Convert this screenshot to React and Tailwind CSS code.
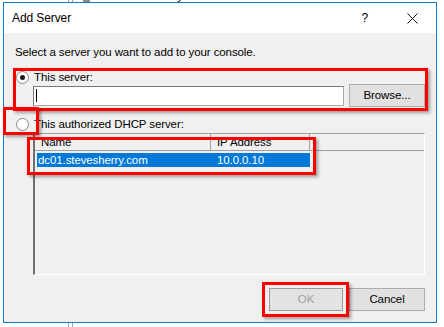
import React from 'react';

function Radio({ checked }) {
  return (
    <div className="w-[13px] h-[13px] rounded-full border border-[#8a8a8a] bg-white flex items-center justify-center shrink-0">
      {checked && <div className="w-[5px] h-[5px] rounded-full bg-[#1a1a1a]" />}
    </div>
  );
}

function Mark({ className }) {
  // red annotation box drawn over the screenshot
  return (
    <div
      className={`absolute border-[3px] border-[#ff0000] shadow-[2px_2px_3px_rgba(0,0,0,0.35)] pointer-events-none ${className}`}
    />
  );
}

function Button({ children, disabled }) {
  return (
    <div
      className={`h-[23px] flex items-center justify-center border ${
        disabled ? 'border-[#9a9a9a] bg-[#e3e3e3] text-[#a0a0a0]' : 'border-[#adadad] bg-[#e1e1e1] text-black'
      }`}
    >
      {children}
    </div>
  );
}

export default function App() {
  return (
    <div className="relative w-[444px] h-[327px] bg-white overflow-hidden font-['Liberation_Sans',Arial,sans-serif] text-[11.5px] tracking-[-0.1px] text-black">
      {/* bit of the window behind */}
      <div className="flex h-[2px] overflow-hidden">
        <div className="ml-[68px] w-px bg-[#a0a0a0]" />
        <div className="ml-[3px] w-px bg-[#a0a0a0]" />
        <div className="ml-[10px] w-[7px] bg-[#8c8c8c]" />
        <div className="ml-[7px] -mt-[10px] leading-[12px] whitespace-nowrap">dc01.stevesherry.com</div>
      </div>

      {/* dialog */}
      <div className="ml-[3px] w-[434px] h-[321px] border border-[#1979ca] flex flex-col">
        <div className="h-[30px] bg-white flex items-center pl-[8px] shrink-0">
          <span className="text-[12px]">Add Server</span>
          <span className="ml-auto mr-[39px] text-[12px]">?</span>
          <svg width="11" height="11" viewBox="0 0 11 11" className="mr-[18px]">
            <path d="M0.5 0.5 L10.5 10.5 M10.5 0.5 L0.5 10.5" stroke="#111" strokeWidth="1" />
          </svg>
        </div>

        <div className="flex-1 bg-[#f0f0f0] px-[11px] flex flex-col">
          <div className="mt-[12px] leading-[15px]">Select a server you want to add to your console.</div>

          <div className="mt-[10px] h-[14px] flex items-center">
            <div className="ml-[1px]">
              <Radio checked />
            </div>
            <span className="ml-[5px] leading-[14px]">This server:</span>
          </div>

          <div className="h-[23px] flex items-center">
            <div className="ml-[18px] w-[311px] h-[20px] bg-white border border-[#a9a9a9] border-t-[#7a7a7a] border-l-[#7a7a7a] flex items-center">
              <div className="ml-[2px] w-px h-[13px] bg-black" />
            </div>
            <div className="ml-[5px] w-[76px]">
              <Button>Browse...</Button>
            </div>
          </div>

          <div className="mt-[10px] h-[14px] flex items-center">
            <div className="ml-[1px]">
              <Radio />
            </div>
            <span className="ml-[5px] leading-[14px]">This authorized DHCP server:</span>
          </div>

          {/* server list */}
          <div className="mt-[2px] ml-[18px] h-[142px] border-t border-t-[#a0a0a0] border-l-2 border-l-[#6f6f6f] border-r border-r-[#ffffff] border-b border-b-[#ffffff] bg-[#f0f0f0] flex flex-col">
            <div className="h-[17px] flex border-b border-b-[#a0a0a0] shrink-0">
              <div className="w-[176px] pl-[6px] border-r border-r-[#a0a0a0] leading-[16px]">Name</div>
              <div className="w-[99px] pl-[6px] border-r border-r-[#a0a0a0] leading-[16px]">IP Address</div>
            </div>
            <div className="mt-[2px] ml-[2px] w-[273px] h-[14px] bg-[#0078d7] text-white flex leading-[14px]">
              <div className="w-[180px] pl-[1px]">dc01.stevesherry.com</div>
              <div>10.0.0.10</div>
            </div>
          </div>

          <div className="mt-[13px] flex justify-end gap-[6px]">
            <div className="w-[74px]">
              <Button disabled>OK</Button>
            </div>
            <div className="w-[76px]">
              <Button>Cancel</Button>
            </div>
          </div>
        </div>
      </div>

      {/* bit of the window behind, below */}
      <div className="flex h-[4px]">
        <div className="ml-[68px] w-px bg-[#a0a0a0]" />
        <div className="ml-[3px] w-px bg-[#a0a0a0]" />
      </div>

      <Mark className="left-[13px] top-[68px] w-[415px] h-[43px]" />
      <Mark className="left-[3px] top-[107px] w-[36px] h-[28px]" />
      <Mark className="left-[27px] top-[137px] w-[289px] h-[38px]" />
      <Mark className="left-[262px] top-[282px] w-[87px] h-[35px]" />
    </div>
  );
}
